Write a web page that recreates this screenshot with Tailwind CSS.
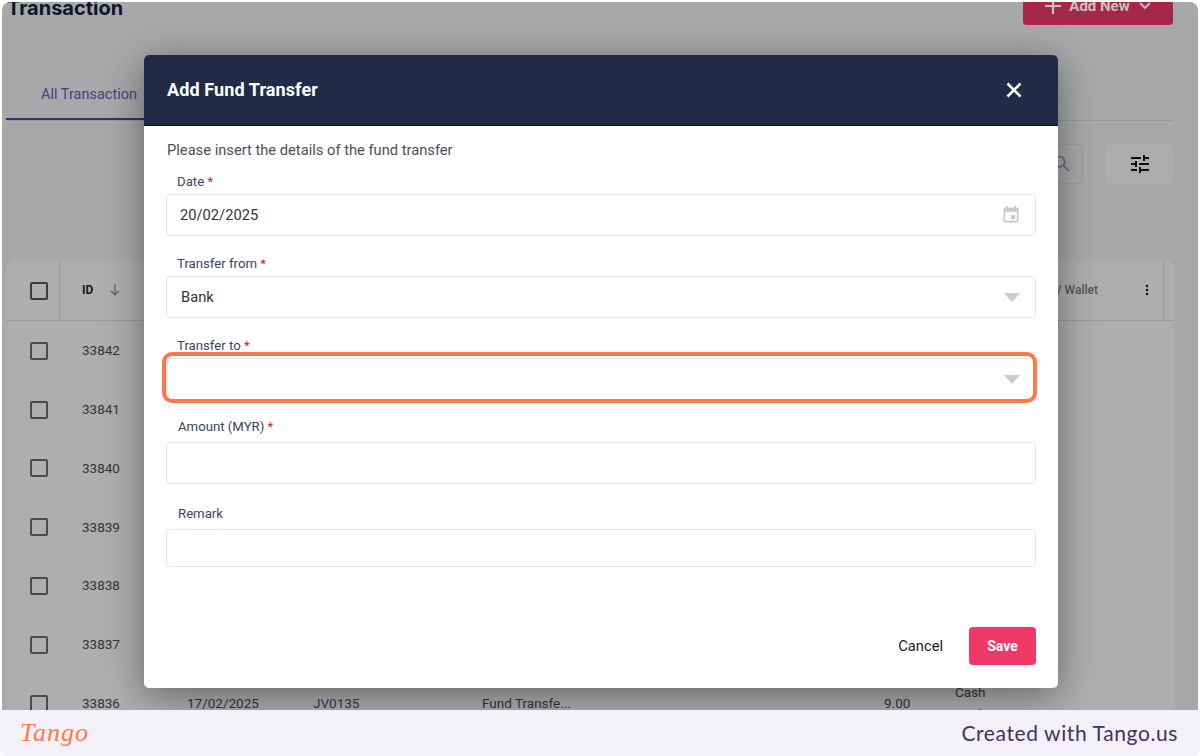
<!DOCTYPE html>
<html lang="en">
<head>
    <meta charset="UTF-8">
    <meta name="viewport" content="width=device-width, initial-scale=1.0">
    <title>Add Fund Transfer</title>
    <script src="https://cdn.jsdelivr.net/npm/@tailwindcss/browser@4"></script>
</head>
<body class="bg-white font-['Roboto',sans-serif]">
<div class="w-[1200px] h-[756px] flex flex-col overflow-hidden">

    <!-- Dimmed page behind the dialog -->
    <div class="relative h-[708px] mt-[2px] mx-[2px] rounded-t-lg overflow-hidden bg-[#a7a8aa]">
        <div class="pl-[5px] pr-[25px]">
            <div class="-mt-[12px] h-[35px] flex justify-between items-start">
                <h1 class="mt-[3px] font-['Inter',sans-serif] text-[20px] leading-[30px] font-bold text-[#11152a]">Transaction</h1>
                <div class="w-[150px] h-[35px] pb-[2px] flex items-center justify-center gap-[8px] rounded-[4px] bg-[#a62847] border-b border-[#c41e4f] text-[#c4c1c4] text-[15px] font-bold">
                    <svg class="w-[16px] h-[16px]" viewBox="0 0 16 16" fill="none" stroke="currentColor" stroke-width="2.2"><path d="M8 0v16M0 8h16"/></svg>
                    <span>Add New</span>
                    <svg class="w-[12px] h-[8px] ml-[1px]" viewBox="0 0 12 8" fill="none" stroke="currentColor" stroke-width="1.8"><path d="M1 1l5 5 5-5"/></svg>
                </div>
            </div>

            <!-- Tabs -->
            <div class="mt-[45px] h-[51px] border-b border-[#999a9c]">
                <div class="-ml-px w-[139px] h-[50px] pl-[35px] pt-[14px] border-b-2 border-[#45286f] text-[14.5px] leading-[22px] text-[#4e3c7c] whitespace-nowrap">All Transaction</div>
            </div>

            <!-- Search and filter -->
            <div class="mt-[23px] h-[40px] flex justify-end gap-[23px]">
                <div class="w-[200px] h-[40px] pr-[9px] flex items-center justify-end rounded-[4px] border border-[#9d9ea0]">
                    <svg class="w-[22px] h-[22px] text-[#64708a]" viewBox="0 0 24 24" fill="currentColor"><path d="M15.5 14h-.79l-.28-.27A6.47 6.47 0 0 0 16 9.5 6.5 6.5 0 1 0 9.5 16c1.61 0 3.09-.59 4.23-1.57l.27.28v.79l5 4.99L20.49 19l-4.99-5zm-6 0C7.01 14 5 11.99 5 9.5S7.01 5 9.5 5 14 7.01 14 9.5 11.99 14 9.5 14z"/></svg>
                </div>
                <div class="mt-[1px] w-[67px] h-[38px] flex items-center justify-center rounded-[4px] bg-[#adadae]">
                    <svg class="w-[24px] h-[24px] text-[#101010]" viewBox="0 0 24 24" fill="currentColor"><path d="M3 17v2h6v-2H3zM3 5v2h10V5H3zm10 16v-2h8v-2h-8v-2h-2v6h2zM7 9v2H3v2h4v2h2V9H7zm14 4v-2H11v2h10zm-6-4h2V7h4V5h-4V3h-2v6z"/></svg>
                </div>
            </div>

            <!-- Table -->
            <div class="mt-[76px] rounded-t-lg bg-[#aeaeae] text-[13.5px] text-[#333338]">
                <div class="h-[61px] flex items-center border-b border-[#9b9b9c]">
                    <div class="w-[53px] h-full pl-[23px] pt-[2px] flex items-center border-r border-[#9b9b9c]"><span class="block w-[18px] h-[18px] rounded-[2px] border-2 border-[#3c3c3e]"></span></div>
                    <span class="ml-[22px] w-[27px] text-[12px] font-bold text-[#17171a]">ID</span>
                    <svg class="w-[12px] h-[14px] text-[#5c5c60]" viewBox="0 0 12 14" fill="none" stroke="currentColor" stroke-width="1.2"><path d="M6 1v11M2 8l4 4 4-4"/></svg>
                    <span class="ml-auto mr-[47px] text-[12px] font-medium text-[#55555a]">Bank / Wallet</span>
                    <svg class="w-[4px] h-[12px] text-[#151515]" viewBox="0 0 4 12" fill="currentColor"><circle cx="2" cy="2" r="1.3"/><circle cx="2" cy="6" r="1.3"/><circle cx="2" cy="10" r="1.3"/></svg>
                    <div class="ml-[14px] w-[10px] h-full border-l border-[#9b9b9c]"></div>
                </div>
                <div class="h-[58.8px] flex items-center pl-[23px]"><span class="block mt-[1px] w-[18px] h-[18px] rounded-[2px] border-2 border-[#4a4a4c]"></span><span class="ml-[34px]">33842</span></div>
                <div class="h-[58.8px] flex items-center pl-[23px]"><span class="block mt-[1px] w-[18px] h-[18px] rounded-[2px] border-2 border-[#4a4a4c]"></span><span class="ml-[34px]">33841</span></div>
                <div class="h-[58.8px] flex items-center pl-[23px]"><span class="block mt-[1px] w-[18px] h-[18px] rounded-[2px] border-2 border-[#4a4a4c]"></span><span class="ml-[34px]">33840</span></div>
                <div class="h-[58.8px] flex items-center pl-[23px]"><span class="block mt-[1px] w-[18px] h-[18px] rounded-[2px] border-2 border-[#4a4a4c]"></span><span class="ml-[34px]">33839</span></div>
                <div class="h-[58.8px] flex items-center pl-[23px]"><span class="block mt-[1px] w-[18px] h-[18px] rounded-[2px] border-2 border-[#4a4a4c]"></span><span class="ml-[34px]">33838</span></div>
                <div class="h-[58.8px] flex items-center pl-[23px]"><span class="block mt-[1px] w-[18px] h-[18px] rounded-[2px] border-2 border-[#4a4a4c]"></span><span class="ml-[34px]">33837</span></div>
                <div class="h-[58.8px] flex items-center pl-[23px]">
                    <span class="block mt-[1px] w-[18px] h-[18px] rounded-[2px] border-2 border-[#4a4a4c]"></span>
                    <span class="ml-[34px] w-[105px]">33836</span>
                    <span class="w-[126px]">17/02/2025</span>
                    <span class="w-[169px] text-[#2c3a58]">JV0135</span>
                    <span class="w-[402px]">Fund Transfe...</span>
                    <span class="w-[71px]">9.00</span>
                    <span class="leading-[22px]">Cash<br>Cash</span>
                </div>
            </div>
        </div>

        <!-- Dialog -->
        <div class="absolute left-[142px] top-[53px] w-[914px] h-[633px] flex flex-col rounded-[5px] bg-white shadow-[0_8px_38px_rgba(0,0,0,0.42)]">
            <div class="h-[71px] pl-[23px] pr-[35px] flex items-center justify-between rounded-t-[5px] bg-[#212b47] border-b border-[#0c1020]">
                <h2 class="text-[18px] tracking-[0.1px] font-bold text-white -mt-[2px]">Add Fund Transfer</h2>
                <svg class="w-[18px] h-[18px] text-white" viewBox="0 0 18 18" fill="none" stroke="currentColor" stroke-width="2.6"><path d="M2.5 2.5l13 13M15.5 2.5l-13 13"/></svg>
            </div>
            <div class="flex-1 px-[22px] flex flex-col">
                <p class="mt-[16px] ml-px text-[14.7px] leading-[17px] text-[#4b4f58]">Please insert the details of the fund transfer</p>

                <label class="mt-[14px] pl-[11px] text-[13.2px] leading-[18px] text-[#3a4562]">Date <span class="text-[#d0192c]">*</span></label>
                <div class="mt-[3px] h-[42px] pl-[13px] pr-[14px] flex items-center justify-between rounded-[4px] border border-[#e4e5e7] text-[14.7px] text-[#333]">
                    <span>20/02/2025</span>
                    <svg class="w-[20px] h-[20px] text-[#c5cad1]" viewBox="0 0 24 24" fill="currentColor"><path d="M17 12h-5v5h5v-5zM16 1v2H8V1H6v2H5c-1.11 0-1.99.9-1.99 2L3 19c0 1.1.89 2 2 2h14c1.1 0 2-.9 2-2V5c0-1.1-.9-2-2-2h-1V1h-2zm3 18H5V8h14v11z"/></svg>
                </div>

                <label class="mt-[19px] pl-[11px] text-[13.2px] leading-[18px] text-[#3a4562]">Transfer from <span class="text-[#d0192c]">*</span></label>
                <div class="mt-[3px] h-[42px] pl-[14px] pr-[15px] flex items-center justify-between rounded-[4px] border border-[#e4e5e7] text-[14.7px] text-[#333]">
                    <span>Bank</span>
                    <span class="block w-0 h-0 border-x-[8px] border-x-transparent border-t-[9px] border-t-[#c8ccd3]"></span>
                </div>

                <label class="mt-[19px] pl-[11px] text-[13.2px] leading-[18px] text-[#3a4562]">Transfer to <span class="text-[#d0192c]">*</span></label>
                <div class="relative mt-[3px] h-[42px] pl-[14px] pr-[15px] flex items-center justify-end rounded-[4px] border border-[#e4e5e7]">
                    <span class="block w-0 h-0 border-x-[8px] border-x-transparent border-t-[9px] border-t-[#c8ccd3]"></span>
                    <!-- Tango step highlight -->
                    <div class="absolute -left-[5px] -right-[2px] -top-[7px] -bottom-[4px] rounded-[10px] border-[4px] border-[#ff7849]"></div>
                </div>

                <label class="mt-[18px] pl-[12px] text-[13.2px] leading-[18px] text-[#3a4562]">Amount (MYR) <span class="text-[#d0192c]">*</span></label>
                <div class="mt-[6px] h-[42px] rounded-[4px] border border-[#e4e5e7]"></div>

                <label class="mt-[21px] pl-[12px] text-[13.2px] leading-[18px] text-[#3a4562]">Remark</label>
                <div class="mt-[6px] h-[38px] rounded-[4px] border border-[#e4e5e7]"></div>

                <div class="mt-[60px] flex items-center justify-end">
                    <span class="mr-[26px] text-[14.7px] text-[#222]">Cancel</span>
                    <span class="w-[67px] h-[38px] flex items-center justify-center rounded-[4px] bg-[#ef3866] text-[14px] font-bold text-white">Save</span>
                </div>
            </div>
        </div>
    </div>

    <!-- Tango footer -->
    <div class="h-[46px] pl-[20px] pr-[22px] flex items-center justify-between rounded-b-lg bg-[#f3f1f7]">
        <span class="font-['Liberation_Serif',serif] italic text-[26px] leading-[40px] tracking-[1px] text-[#ff7849]">Tango</span>
        <span class="font-['Lato',sans-serif] text-[21px] tracking-[0.6px] text-[#3f3557]">Created with Tango.us</span>
    </div>
</div>
</body>
</html>
